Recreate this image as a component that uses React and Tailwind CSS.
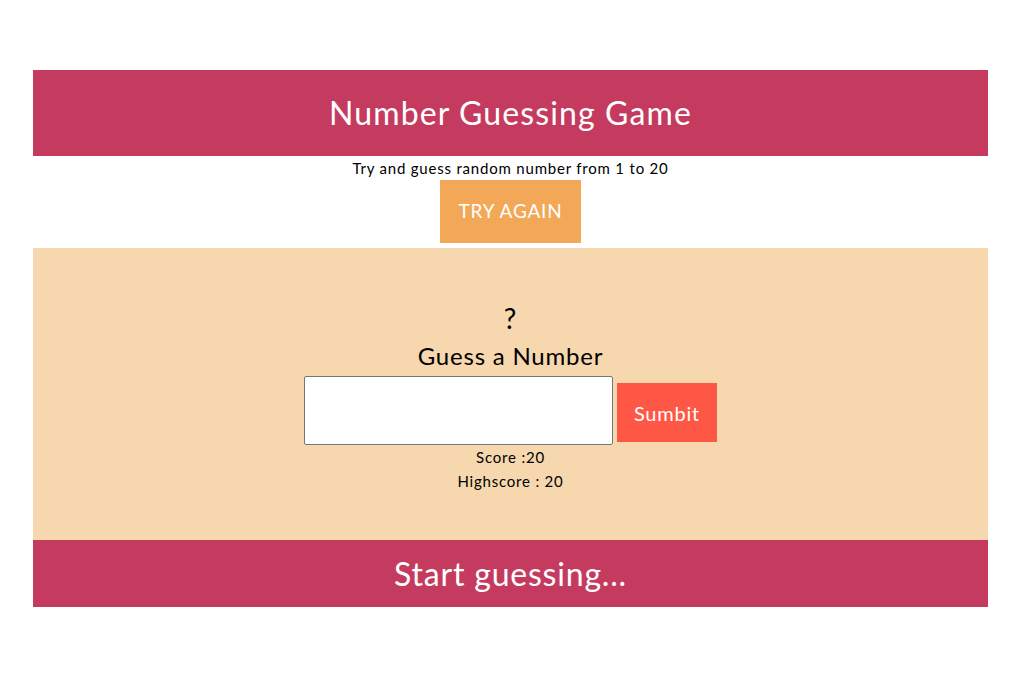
import React, { useState } from "react";

export default function App() {
  const [guess, setGuess] = useState("");

  return (
    <div className="min-h-screen bg-white font-['Lato',sans-serif] tracking-[0.05em] text-black">
      <div className="ml-[33px] mr-[34px] pt-[70px] flex flex-col items-center">
        {/* Header */}
        <div className="w-full h-[86px] bg-[#c53b60] flex items-center justify-center">
          <h1 className="text-[32px] tracking-[0.035em] text-white">Number Guessing Game</h1>
        </div>

        <p className="h-[24px] leading-[24px] text-[15px]">
          Try and guess random number from 1 to 20
        </p>

        <button className="w-[141px] h-[63px] bg-[#f3a857] text-white text-[19px] uppercase">
          Try again
        </button>

        {/* Game box */}
        <div className="mt-[5px] w-full h-[292px] bg-[#f6d7ae] flex flex-col items-center pt-[52px]">
          <div className="h-[36px] leading-[36px] text-[28px]">?</div>
          <div className="h-[40px] leading-[40px] text-[24px]">Guess a Number</div>
          <div className="flex items-center gap-[4px]">
            <input
              type="number"
              value={guess}
              onChange={(e) => setGuess(e.target.value)}
              className="w-[309px] h-[69px] bg-white border border-[#767676] rounded-[2px] outline-none"
            />
            <button className="mt-[4px] w-[100px] h-[59px] bg-[#ff5745] text-white text-[20px]">
              Sumbit
            </button>
          </div>
          <p className="h-[24px] leading-[24px] text-[15px]">Score :20</p>
          <p className="h-[24px] leading-[24px] text-[15px]">Highscore : 20</p>
        </div>

        {/* Footer */}
        <div className="w-full h-[67px] bg-[#c53b60] flex items-center justify-center">
          <h2 className="text-[32px] text-white">Start guessing...</h2>
        </div>
      </div>
    </div>
  );
}
